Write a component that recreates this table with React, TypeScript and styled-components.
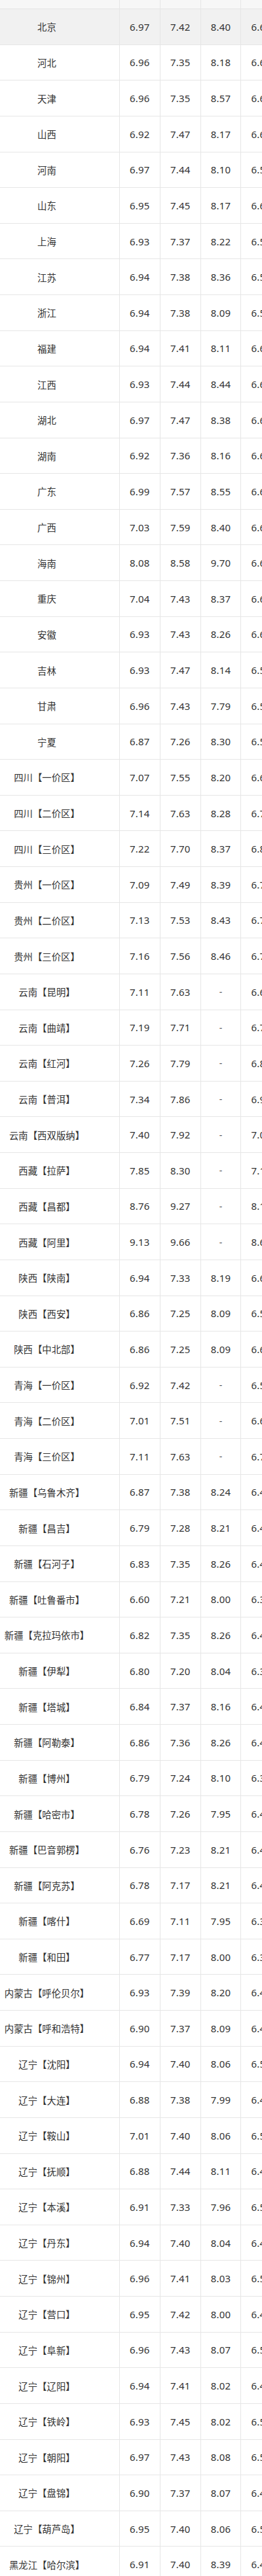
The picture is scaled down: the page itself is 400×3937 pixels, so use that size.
import React from 'react';
import styled, { createGlobalStyle } from 'styled-components';

// name, 92#, 95#, 98#, 0#
const ROWS: string[][] = [
  ['北京', '6.97', '7.42', '8.40', '6.62'],
  ['河北', '6.96', '7.35', '8.18', '6.61'],
  ['天津', '6.96', '7.35', '8.57', '6.63'],
  ['山西', '6.92', '7.47', '8.17', '6.64'],
  ['河南', '6.97', '7.44', '8.10', '6.58'],
  ['山东', '6.95', '7.45', '8.17', '6.60'],
  ['上海', '6.93', '7.37', '8.22', '6.56'],
  ['江苏', '6.94', '7.38', '8.36', '6.57'],
  ['浙江', '6.94', '7.38', '8.09', '6.57'],
  ['福建', '6.94', '7.41', '8.11', '6.61'],
  ['江西', '6.93', '7.44', '8.44', '6.65'],
  ['湖北', '6.97', '7.47', '8.38', '6.63'],
  ['湖南', '6.92', '7.36', '8.16', '6.62'],
  ['广东', '6.99', '7.57', '8.55', '6.64'],
  ['广西', '7.03', '7.59', '8.40', '6.66'],
  ['海南', '8.08', '8.58', '9.70', '6.67'],
  ['重庆', '7.04', '7.43', '8.37', '6.65'],
  ['安徽', '6.93', '7.43', '8.26', '6.63'],
  ['吉林', '6.93', '7.47', '8.14', '6.55'],
  ['甘肃', '6.96', '7.43', '7.79', '6.53'],
  ['宁夏', '6.87', '7.26', '8.30', '6.52'],
  ['四川【一价区】', '7.07', '7.55', '8.20', '6.68'],
  ['四川【二价区】', '7.14', '7.63', '8.28', '6.75'],
  ['四川【三价区】', '7.22', '7.70', '8.37', '6.83'],
  ['贵州【一价区】', '7.09', '7.49', '8.39', '6.71'],
  ['贵州【二价区】', '7.13', '7.53', '8.43', '6.74'],
  ['贵州【三价区】', '7.16', '7.56', '8.46', '6.77'],
  ['云南【昆明】', '7.11', '7.63', '-', '6.68'],
  ['云南【曲靖】', '7.19', '7.71', '-', '6.75'],
  ['云南【红河】', '7.26', '7.79', '-', '6.82'],
  ['云南【普洱】', '7.34', '7.86', '-', '6.90'],
  ['云南【西双版纳】', '7.40', '7.92', '-', '7.00'],
  ['西藏【拉萨】', '7.85', '8.30', '-', '7.16'],
  ['西藏【昌都】', '8.76', '9.27', '-', '8.12'],
  ['西藏【阿里】', '9.13', '9.66', '-', '8.64'],
  ['陕西【陕南】', '6.94', '7.33', '8.19', '6.62'],
  ['陕西【西安】', '6.86', '7.25', '8.09', '6.54'],
  ['陕西【中北部】', '6.86', '7.25', '8.09', '6.60'],
  ['青海【一价区】', '6.92', '7.42', '-', '6.56'],
  ['青海【二价区】', '7.01', '7.51', '-', '6.65'],
  ['青海【三价区】', '7.11', '7.63', '-', '6.75'],
  ['新疆【乌鲁木齐】', '6.87', '7.38', '8.24', '6.42'],
  ['新疆【昌吉】', '6.79', '7.28', '8.21', '6.41'],
  ['新疆【石河子】', '6.83', '7.35', '8.26', '6.44'],
  ['新疆【吐鲁番市】', '6.60', '7.21', '8.00', '6.34'],
  ['新疆【克拉玛依市】', '6.82', '7.35', '8.26', '6.43'],
  ['新疆【伊犁】', '6.80', '7.20', '8.04', '6.37'],
  ['新疆【塔城】', '6.84', '7.37', '8.16', '6.45'],
  ['新疆【阿勒泰】', '6.86', '7.36', '8.26', '6.46'],
  ['新疆【博州】', '6.79', '7.24', '8.10', '6.38'],
  ['新疆【哈密市】', '6.78', '7.26', '7.95', '6.41'],
  ['新疆【巴音郭楞】', '6.76', '7.23', '8.21', '6.44'],
  ['新疆【阿克苏】', '6.78', '7.17', '8.21', '6.42'],
  ['新疆【喀什】', '6.69', '7.11', '7.95', '6.36'],
  ['新疆【和田】', '6.77', '7.17', '8.00', '6.37'],
  ['内蒙古【呼伦贝尔】', '6.93', '7.39', '8.20', '6.45'],
  ['内蒙古【呼和浩特】', '6.90', '7.37', '8.09', '6.44'],
  ['辽宁【沈阳】', '6.94', '7.40', '8.06', '6.52'],
  ['辽宁【大连】', '6.88', '7.38', '7.99', '6.47'],
  ['辽宁【鞍山】', '7.01', '7.40', '8.06', '6.53'],
  ['辽宁【抚顺】', '6.88', '7.44', '8.11', '6.48'],
  ['辽宁【本溪】', '6.91', '7.33', '7.96', '6.51'],
  ['辽宁【丹东】', '6.94', '7.40', '8.04', '6.49'],
  ['辽宁【锦州】', '6.96', '7.41', '8.03', '6.52'],
  ['辽宁【营口】', '6.95', '7.42', '8.00', '6.48'],
  ['辽宁【阜新】', '6.96', '7.43', '8.07', '6.53'],
  ['辽宁【辽阳】', '6.94', '7.41', '8.02', '6.49'],
  ['辽宁【铁岭】', '6.93', '7.45', '8.02', '6.52'],
  ['辽宁【朝阳】', '6.97', '7.43', '8.08', '6.54'],
  ['辽宁【盘锦】', '6.90', '7.37', '8.07', '6.47'],
  ['辽宁【葫芦岛】', '6.95', '7.40', '8.06', '6.51'],
  ['黑龙江【哈尔滨】', '6.91', '7.40', '8.39', '6.46'],
];

const GlobalStyle = createGlobalStyle`
  html, body {
    margin: 0;
    padding: 0;
    background: #ffffff;
    overflow-x: hidden;
  }
  body {
    font-family: "Noto Sans", "Noto Sans CJK SC", sans-serif;
    color: #333333;
  }
`;

const Viewport = styled.div`
  width: 400px;
  overflow: hidden;
`;

const Table = styled.div`
  width: 430px;
`;

const Row = styled.div<{ $active?: boolean; $head?: boolean }>`
  display: grid;
  grid-template-columns: 182.7px 62.3px 61.7px 61.7px 61.6px;
  height: ${(p) => (p.$head ? '14px' : '54.64px')};
  background: ${(p) => (p.$head ? '#f7f7f7' : p.$active ? '#f1f1f1' : '#ffffff')};
`;

const Cell = styled.div`
  box-sizing: border-box;
  display: flex;
  align-items: center;
  justify-content: center;
  border-right: 1px solid #e6e6e6;
  border-bottom: 1px solid #e6e6e6;
  font-size: 15px;
  letter-spacing: 0.2px;
  white-space: nowrap;
`;

const NameCell = styled(Cell)`
  padding-right: 38.7px;
  font-family: "Noto Sans CJK SC", sans-serif;
  font-size: 14.4px;
  letter-spacing: 0;
`;

const Dash = styled.span`
  color: #555555;
  font-size: 14px;
`;

export default function App() {
  return (
    <Viewport>
      <GlobalStyle />
      <Table>
        <Row $head>
          <NameCell />
          <Cell />
          <Cell />
          <Cell />
          <Cell />
        </Row>
        {ROWS.map((r, i) => (
          <Row key={r[0]} $active={i === 0}>
            <NameCell>{r[0]}</NameCell>
            {r.slice(1).map((v, j) => (
              <Cell key={j}>{v === '-' ? <Dash>-</Dash> : v}</Cell>
            ))}
          </Row>
        ))}
      </Table>
    </Viewport>
  );
}
